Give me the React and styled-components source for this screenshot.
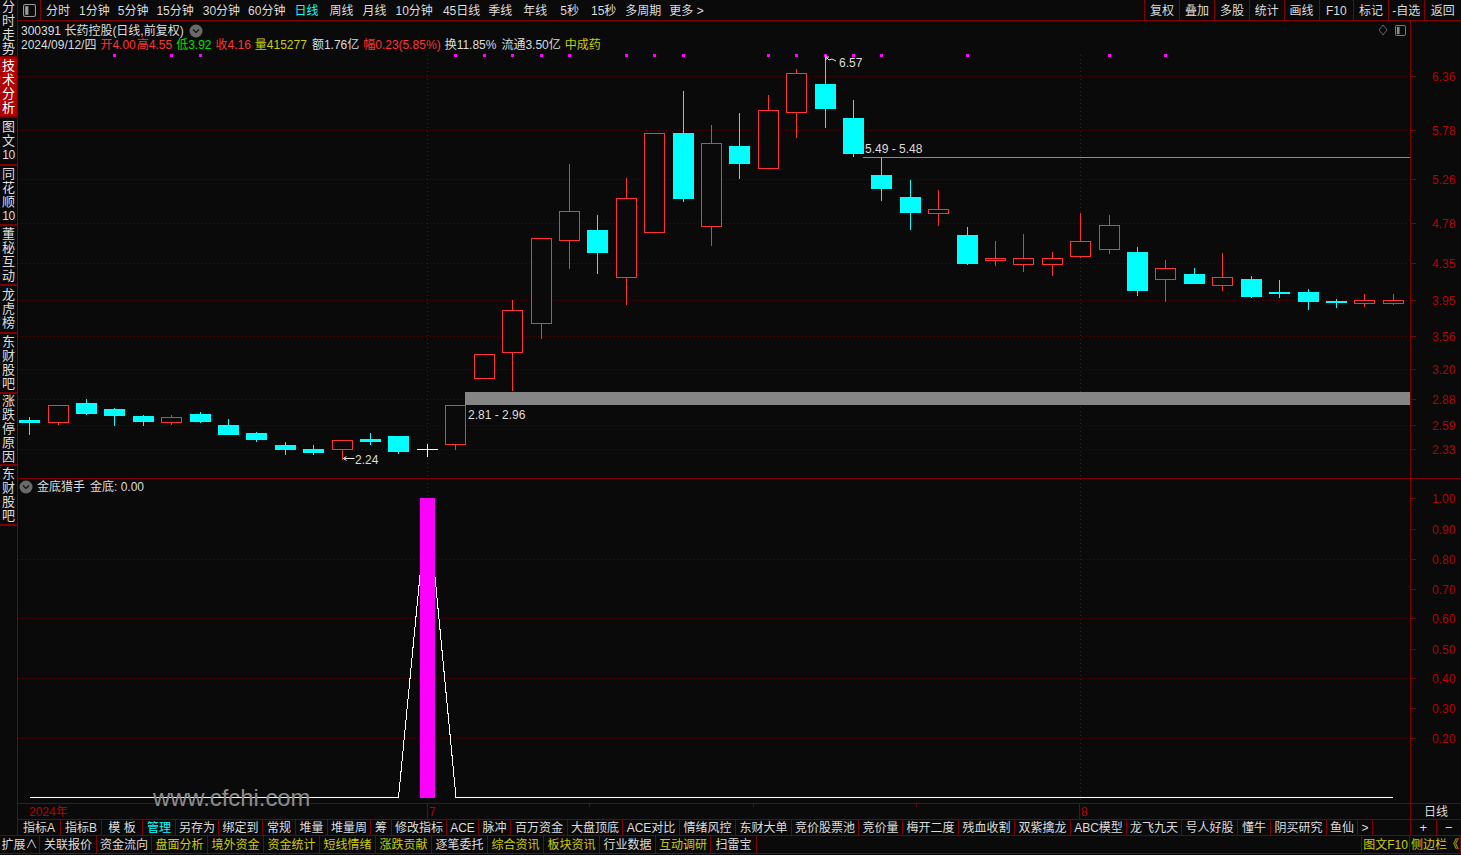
import React from "react";
import styled, { createGlobalStyle } from "styled-components";

const BG = "#0a0a0a";
const LINE = "#800000";
const TXT = "#dcdcdc";
const RED = "#ff3232";
const CYAN = "#00ffff";
const YEL = "#cccc00";
const AXIS = "#b80000";

const Global = createGlobalStyle`
  html, body { margin: 0; padding: 0; background: ${BG}; overflow: hidden; }
  * { box-sizing: border-box; }
`;

const Page = styled.div`
  width: 1461px; height: 855px; background: ${BG}; color: ${TXT};
  font: 12px/14px "Liberation Sans", "Noto Sans CJK SC", sans-serif;
  display: flex; flex-direction: column; position: relative; overflow: hidden;
`;
const Body = styled.div`display: flex; height: 836px;`;
const Sidebar = styled.div`
  width: 18px; flex: none; display: flex; flex-direction: column;
  border-right: 1px solid ${LINE}; border-bottom: 1px solid ${LINE};
`;
const SideCell = styled.div`
  height: ${p => p.$h}px; flex: none; display: flex; flex-direction: column; align-items: center; justify-content: center;
  background: ${p => (p.$active ? "#b00000" : "transparent")};
  color: ${p => (p.$active ? "#fff" : TXT)};
  border-bottom: 2px solid ${LINE};
  line-height: 14px;
`;
const SideChar = styled.span`display: block; font-size: ${p => (p.$num ? "12px" : "13px")}; white-space: nowrap; letter-spacing: ${p => (p.$num ? "-0.5px" : "0")};`;

const Main = styled.div`flex: 1; display: flex; flex-direction: column; min-width: 0;`;

const TopBar = styled.div`
  height: 21px; flex: none; display: flex; align-items: center; border-bottom: 1px solid ${LINE};
`;
const ViewToggle = styled.div`
  width: 23px; height: 20px; flex: none; display: flex; align-items: center; justify-content: center;
  border-right: 1px solid ${LINE};
`;
const PeriodList = styled.div`display: flex; align-items: center; padding: 2px 0 0 5px; flex: 1; white-space: nowrap;`;
const Period = styled.span`
  margin-right: ${p => p.$mr}px; color: ${p => (p.$on ? CYAN : TXT)};
`;
const ToolList = styled.div`display: flex; height: 20px;`;
const Tool = styled.div`
  width: ${p => p.$w}px; display: flex; align-items: center; justify-content: center; padding-top: 2px;
  border-left: 1px solid ${LINE}; white-space: nowrap;
`;

const Row = styled.div`display: flex; flex: none; height: ${p => p.$h}px; border-bottom: 1px solid ${LINE};`;
const PaneBox = styled.div`position: relative; width: 1392px; flex: none;`;
const Canvas = styled.svg`display: block; width: 100%; height: 100%;`;
const AxisBox = styled.div`flex: 1; border-left: 1px solid ${LINE}; position: relative;`;
const AxisCanvas = styled.svg`display: block; width: 100%; height: 100%;`;
const AxisText = styled.text`
  fill: ${AXIS}; font: 12px "Liberation Sans", sans-serif; dominant-baseline: central;
`;
const ChartText = styled.text`
  fill: ${TXT}; font: 12px "Liberation Sans", sans-serif; dominant-baseline: central;
`;

const InfoHeader = styled.div`
  position: absolute; left: 3px; top: 2px; display: flex; flex-direction: column; white-space: nowrap; padding-top: 1px;
`;
const InfoLine = styled.div`display: flex; align-items: center; height: 14px;`;
const Quote = styled.span`color: ${p => p.$c || TXT}; margin-left: ${p => p.$ml || 0}px;`;
const CornerIcons = styled.div`position: absolute; right: 4px; top: 3px; display: flex; gap: 7px; align-items: center;`;
const IndHeader = styled.div`position: absolute; left: 1px; top: 1px; display: flex; align-items: center; gap: 4px; white-space: nowrap;`;
const IndValue = styled.span`margin-left: 1px;`;

const TimeRow = styled.div`display: flex; height: 16px; flex: none; border-bottom: 1px solid ${LINE};`;
const TimeAxis = styled.div`width: 1392px; flex: none; position: relative;`;
const TimeLabel = styled.span`
  position: absolute; left: ${p => p.$x}px; top: 1px; color: ${AXIS}; font-size: 12px;
  &::before { content: ""; position: absolute; left: -2px; top: -1px; width: 1px; height: ${p => (p.$mark ? 15 : 0)}px; background: ${LINE}; }
`;
const TimeTick = styled.i`position: absolute; left: ${p => p.$x}px; top: 0; width: 1px; height: 3px; background: ${LINE};`;
const CycleCell = styled.div`flex: 1; border-left: 1px solid ${LINE}; display: flex; align-items: center; justify-content: center;`;

const TabRow = styled.div`display: flex; height: 16px; flex: none; border-bottom: 1px solid ${LINE};`;
const TabList = styled.div`width: 1392px; flex: none; display: flex; white-space: nowrap;`;
const Tab = styled.div`
  width: ${p => p.$w}px; flex: none; display: flex; align-items: center; justify-content: center;
  border-right: 1px solid ${LINE}; color: ${p => (p.$on ? CYAN : TXT)};
`;
const ZoomCell = styled.div`
  flex: 1; display: flex; align-items: center; justify-content: center; font-size: 13px;
  border-left: 1px solid ${LINE};
`;

const BottomBar = styled.div`
  height: 18px; flex: none; display: flex; border-bottom: 1px solid ${LINE}; white-space: nowrap;
`;
const BottomTab = styled.div`
  width: ${p => p.$w}px; flex: none; display: flex; align-items: center; justify-content: center; padding-top: 1px;
  border-right: 1px solid ${LINE}; border-left: ${p => (p.$edge ? `1px solid ${LINE}` : "none")};
  color: ${p => (p.$y ? YEL : TXT)};
`;
const Spacer = styled.div`flex: 1;`;
const Watermark = styled.div`
  position: absolute; left: 153px; top: 784px; color: #8c8c8c; font: 23.8px/28px "Liberation Sans", sans-serif;
`;

const periods = [
  ["分时", 9], ["1分钟", 8], ["5分钟", 8], ["15分钟", 9], ["30分钟", 8], ["60分钟", 9], ["日线", 11, true],
  ["周线", 9], ["月线", 9], ["10分钟", 10], ["45日线", 8], ["季线", 11], ["年线", 13], ["5秒", 12], ["15秒", 9], ["多周期", 8], ["更多 >", 0],
];
const tools = [["复权", 35], ["叠加", 35], ["多股", 35], ["统计", 34.5], ["画线", 35], ["F10", 34.5], ["标记", 35], ["-自选", 35.5], ["返回", 37.5]];
const sideCells = [
  [["分", "时", "走", "势"], 58], [["技", "术", "分", "析"], 60, true], [["图", "文", "10"], 48],
  [["同", "花", "顺", "10"], 60], [["董", "秘", "互", "动"], 60], [["龙", "虎", "榜"], 48],
  [["东", "财", "股", "吧"], 60], [["涨", "跌", "停", "原", "因"], 72], [["东", "财", "股", "吧"], 60],
];
const tabs = [
  ["指标A", 43], ["指标B", 41], ["模 板", 41], ["管理", 33, true], ["另存为", 43], ["绑定到", 44], ["常规", 33], ["堆量", 32],
  ["堆量周", 43], ["筹", 21], ["修改指标", 55], ["ACE", 32], ["脉冲", 32], ["百万资金", 57], ["大盘顶底", 55], ["ACE对比", 57], ["情绪风控", 56],
  ["东财大单", 56], ["竞价股票池", 67], ["竞价量", 44], ["梅开二度", 56], ["残血收割", 56], ["双紫擒龙", 56], ["ABC模型", 56],
  ["龙飞九天", 55], ["号人好股", 56], ["懂牛", 33], ["阴买研究", 56], ["鱼仙", 31], [">", 15],
];
const bottoms = [
  ["扩展∧", 40, false], ["关联报价", 57, false], ["资金流向", 55, false], ["盘面分析", 56, true], ["境外资金", 56, true], ["资金统计", 56, true],
  ["短线情绪", 56, true], ["涨跌贡献", 56, true], ["逐笔委托", 56, false], ["综合资讯", 56, true], ["板块资讯", 56, true], ["行业数据", 56, false],
  ["互动调研", 55, true], ["扫雷宝", 46, false],
];

// [center x, type, bodyTop, bodyBottom, wickTop, wickBottom]
const candles = [
  [29, "c", 420, 423, 417, 435], [58, "r", 405, 422, 405, 425], [86, "c", 403, 414, 399, 415], [114, "c", 409, 416, 408, 426],
  [143, "c", 416, 422, 415, 426], [171, "r", 417, 422, 415, 425], [200, "c", 414, 422, 412, 423], [228, "c", 425, 435, 419, 435],
  [256, "c", 433, 440, 432, 442], [285, "c", 445, 450, 442, 455], [313, "c", 449, 453, 445, 455], [342, "r", 440, 449, 440, 460],
  [370, "c", 439, 442, 433, 445], [398, "c", 436, 452, 436, 454], [427, "w", 449, 450, 444, 457], [455, "r", 405, 444, 405, 450],
  [484, "r", 354, 378, 354, 378], [512, "r", 310, 352, 300, 391], [541, "r", 238, 323, 238, 339], [569, "r", 211, 240, 164, 269],
  [597, "c", 230, 253, 215, 274], [626, "r", 198, 277, 178, 305], [654, "r", 133, 232, 133, 232], [683, "c", 133, 199, 91, 202],
  [711, "r", 143, 226, 125, 246], [739, "c", 146, 164, 113, 179], [768, "r", 110, 168, 95, 168], [796, "r", 73, 112, 69, 138],
  [825, "c", 84, 109, 55, 128], [853, "c", 118, 154, 100, 157], [881, "c", 175, 189, 158, 201], [910, "c", 197, 213, 180, 230],
  [938, "r", 209, 213, 190, 226], [967, "c", 235, 264, 227, 265], [995, "r", 258, 260, 241, 266], [1023, "r", 258, 264, 234, 272],
  [1052, "r", 258, 264, 252, 276], [1080, "r", 241, 256, 213, 258], [1109, "r", 225, 249, 215, 254], [1137, "c", 252, 291, 247, 296],
  [1165, "r", 268, 279, 260, 302], [1194, "c", 274, 284, 268, 284], [1222, "r", 277, 285, 253, 291], [1251, "c", 279, 297, 276, 298],
  [1279, "c", 292, 294, 280, 298], [1308, "c", 292, 302, 289, 310], [1336, "c", 301, 303, 299, 308], [1364, "r", 300, 303, 294, 307],
  [1393, "r", 300, 303, 294, 305],
];
const dots = [113, 170, 199, 454, 483, 511, 540, 568, 625, 653, 682, 767, 795, 824, 852, 880, 966, 1108, 1164];
const priceAxis = [["6.36", 76], ["5.78", 130], ["5.26", 179], ["4.78", 223], ["4.35", 263], ["3.95", 300], ["3.56", 336], ["3.20", 369], ["2.88", 399], ["2.59", 425], ["2.33", 449]];
const indAxis = [["1.00", 498], ["0.90", 529], ["0.80", 559], ["0.70", 589], ["0.60", 618], ["0.50", 649], ["0.40", 678], ["0.30", 708], ["0.20", 738]];

const Candle = ({ c }) => {
  const [x, t, bt, bb, wt, wb] = c;
  const color = t === "c" ? CYAN : t === "r" ? RED : "#fff";
  if (t === "w") {
    return (
      <g shapeRendering="crispEdges" stroke={color}>
        <line x1={x - 10} x2={x + 11} y1={bt + 0.5} y2={bt + 0.5} />
        <line x1={x + 0.5} x2={x + 0.5} y1={wt} y2={wb} />
      </g>
    );
  }
  return (
    <g shapeRendering="crispEdges">
      <line x1={x + 0.5} x2={x + 0.5} y1={wt} y2={wb} stroke={color} />
      {t === "c"
        ? <rect x={x - 10} y={bt} width={21} height={bb - bt} fill={color} />
        : <rect x={x - 10 + 0.5} y={bt + 0.5} width={20} height={bb - bt} fill={BG} stroke={color} />}
    </g>
  );
};

const Chevron = ({ cx, cy }) => (
  <g>
    <circle cx={cx} cy={cy} r={6.5} fill="#6a6a6a" />
    <path d={`M${cx - 3} ${cy - 1.5}L${cx} ${cy + 1.5}L${cx + 3} ${cy - 1.5}`} fill="none" stroke="#111" strokeWidth="1.2" />
  </g>
);
const ChevronBadge = styled.svg`display: block; flex: none; width: 14px; height: 14px;`;
const BoxIcon = ({ size = 12, color = "#888" }) => (
  <svg width={size} height={size} viewBox="0 0 12 12" style={{ display: "block" }}>
    <rect x="0.5" y="0.5" width="11" height="11" rx="1.5" fill="none" stroke={color} />
    <rect x="2" y="2" width="3" height="8" fill={color} />
  </svg>
);

const HLines = ({ ys }) => (
  <g shapeRendering="crispEdges" stroke={LINE} strokeDasharray="1 3" opacity="0.65">
    {ys.map(y => <line key={y} x1="18" x2="1410" y1={y + 0.5} y2={y + 0.5} />)}
  </g>
);
const VLine = ({ x, y1, y2 }) => (
  <line x1={x + 0.5} x2={x + 0.5} y1={y1} y2={y2} stroke={LINE} strokeDasharray="1 3" shapeRendering="crispEdges" />
);

export default function App() {
  return (
    <Page>
      <Global />
      <Body>
        <Sidebar>
          {sideCells.map(([chars, h, on], i) => (
            <SideCell key={i} $h={h} $active={on}>
              {chars.map((ch, j) => <SideChar key={j} $num={ch === "10"}>{ch}</SideChar>)}
            </SideCell>
          ))}
        </Sidebar>
        <Main>
          <TopBar>
            <ViewToggle><BoxIcon size={13} color="#999" /></ViewToggle>
            <PeriodList>
              {periods.map(([t, mr, on]) => <Period key={t} $mr={mr} $on={on}>{t}</Period>)}
            </PeriodList>
            <ToolList>
              {tools.map(([t, w]) => <Tool key={t} $w={w}>{t}</Tool>)}
            </ToolList>
          </TopBar>

          <Row $h={458}>
            <PaneBox>
              <Canvas viewBox="18 21 1392 457">
                <HLines ys={priceAxis.map(a => a[1])} />
                <VLine x={427} y1={55} y2={478} />
                <VLine x={1080} y1={55} y2={478} />
                <g shapeRendering="crispEdges" fill="#ff00ff">
                  {dots.map(x => <rect key={x} x={x} y={54} width={3} height={3} />)}
                </g>
                <rect x="465" y="392" width="945" height="13" fill="#858585" shapeRendering="crispEdges" />
                <line x1="863" x2="1410" y1="157.5" y2="157.5" stroke="#8c8c8c" shapeRendering="crispEdges" />
                {candles.map(c => <Candle key={c[0]} c={c} />)}
                <ChartText x="468" y="415">2.81 - 2.96</ChartText>
                <ChartText x="865" y="149">5.49 - 5.48</ChartText>
                <ChartText x="839" y="63">6.57</ChartText>
                <ChartText x="355" y="460">2.24</ChartText>
                <path d="M826 57l3 0M826 57l0 3M826 57l3 3l3 -1l4 2" fill="none" stroke="#e8e8e8" />
                <path d="M343.5 458.5h11M343.5 458.5l3 -2M343.5 458.5l3 2" fill="none" stroke="#e8e8e8" />
              </Canvas>
              <InfoHeader>
                <InfoLine>
                  <Quote>300391 长药控股(日线,前复权)</Quote>
                  <ChevronBadge viewBox="0 0 14 14" style={{ marginLeft: 5 }}><Chevron cx={7} cy={7} /></ChevronBadge>
                </InfoLine>
                <InfoLine>
                  <Quote>2024/09/12/四</Quote>
                  <Quote $c={RED} $ml={4}>开4.00</Quote>
                  <Quote $c={RED} $ml={1}>高4.55</Quote>
                  <Quote $c="#00e000" $ml={4}>低3.92</Quote>
                  <Quote $c={RED} $ml={4}>收4.16</Quote>
                  <Quote $c={YEL} $ml={4}>量415277</Quote>
                  <Quote $ml={5}>额1.76亿</Quote>
                  <Quote $c={RED} $ml={4}>幅0.23(5.85%)</Quote>
                  <Quote $ml={4}>换11.85%</Quote>
                  <Quote $ml={5}>流通3.50亿</Quote>
                  <Quote $c={YEL} $ml={4}>中成药</Quote>
                </InfoLine>
              </InfoHeader>
              <CornerIcons>
                <svg width="10" height="12" viewBox="0 0 10 12" style={{ display: "block" }}>
                  <path d="M5 1L9 6L5 11L1 6Z" fill="none" stroke="#666" />
                </svg>
                <BoxIcon size={11} color="#888" />
              </CornerIcons>
            </PaneBox>
            <AxisBox>
              <AxisCanvas viewBox="1411 21 50 457">
                {priceAxis.map(([t, y]) => (
                  <g key={t}>
                    <line x1="1411" x2="1416" y1={y + 0.5} y2={y + 0.5} stroke={LINE} shapeRendering="crispEdges" />
                    <AxisText x="1432" y={y + 1}>{t}</AxisText>
                  </g>
                ))}
              </AxisCanvas>
            </AxisBox>
          </Row>

          <Row $h={325}>
            <PaneBox>
              <Canvas viewBox="18 479 1392 324">
                <HLines ys={[559, 618, 678, 738]} />
                <VLine x={427} y1={479} y2={803} />
                <VLine x={1080} y1={479} y2={803} />
                <polyline points="30,797.5 398.5,797.5 427.5,498 456,797.5 1393,797.5" fill="none" stroke="#fff" shapeRendering="crispEdges" />
                <rect x="420" y="498" width="15" height="300" fill="#ff00ff" shapeRendering="crispEdges" />
              </Canvas>
              <IndHeader>
                <ChevronBadge viewBox="0 0 14 14"><Chevron cx={7} cy={7} /></ChevronBadge>
                <span>金底猎手</span>
                <IndValue>金底: 0.00</IndValue>
              </IndHeader>
            </PaneBox>
            <AxisBox>
              <AxisCanvas viewBox="1411 479 50 324">
                {indAxis.map(([t, y]) => (
                  <g key={t}>
                    <line x1="1411" x2="1416" y1={y + 0.5} y2={y + 0.5} stroke={LINE} shapeRendering="crispEdges" />
                    <AxisText x="1432" y={y + 1}>{t}</AxisText>
                  </g>
                ))}
              </AxisCanvas>
            </AxisBox>
          </Row>

          <TimeRow>
            <TimeAxis>
              <TimeLabel $x={11}>2024年</TimeLabel>
              <TimeLabel $x={411} $mark>7</TimeLabel>
              <TimeTick $x={571} />
              <TimeTick $x={735} />
              <TimeTick $x={898} />
              <TimeLabel $x={1063} $mark>8</TimeLabel>
            </TimeAxis>
            <CycleCell>日线</CycleCell>
          </TimeRow>
          <TabRow>
            <TabList>
              {tabs.map(([t, w, on]) => <Tab key={t} $w={w} $on={on}>{t}</Tab>)}
            </TabList>
            <ZoomCell>+</ZoomCell>
            <ZoomCell>−</ZoomCell>
          </TabRow>
        </Main>
      </Body>
      <BottomBar>
        {bottoms.map(([t, w, y]) => <BottomTab key={t} $w={w} $y={y}>{t}</BottomTab>)}
        <Spacer />
        <BottomTab $w={49} $y $edge>图文F10</BottomTab>
        <BottomTab $w={51} $y>侧边栏《</BottomTab>
      </BottomBar>
      <Watermark>www.cfchi.com</Watermark>
    </Page>
  );
}
